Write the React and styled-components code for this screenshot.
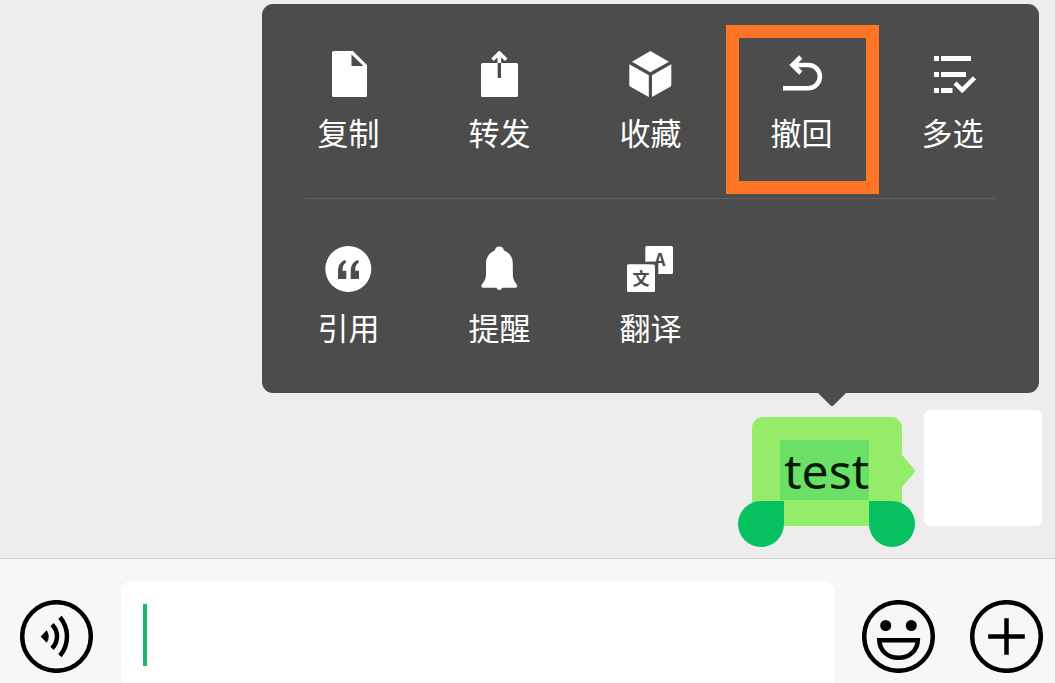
import React, { useState } from 'react'
import styled, { createGlobalStyle } from 'styled-components'


const CopyIcon = () => (
  <Glyph viewBox="0 0 47 46">
    <path fillRule="evenodd" d="M9 0H28L42 14V44.500Q42 46 40.500 46H9Q7 46 7 44.500V1.500Q7 0 9 0ZM26.500 3.500V15H38.500Z" />
  </Glyph>
)

const ForwardIcon = () => (
  <Glyph viewBox="0 0 47 46">
    <path d="M6.500 12H21.700V27H25V12H40.500Q42 12 42 13.500V44.500Q42 46 40.500 46H6.500Q5 46 5 44.500V13.500Q5 12 6.500 12Z" />
    <path d="M23.300 12V3M16.500 8.800L23.300 2L30.200 8.800" fill="none" stroke="#fff" strokeWidth="3.600" />
  </Glyph>
)

const FavoriteIcon = () => (
  <Glyph viewBox="0 0 47 46">
    <path d="M23.300 0L42 10.700L23.300 21.300L5 10.700Z" />
    <path d="M2.300 13.300L21.800 24.300V46L3.500 35.700Q2.300 35 2.300 33.700Z" />
    <path d="M44.300 13.300L25 24.300V46L43.200 35.700Q44.300 35 44.300 33.700Z" />
  </Glyph>
)

const RecallIcon = () => (
  <Glyph viewBox="0 0 47 46">
    <path d="M15 14H30.300A11.600 11.600 0 0 1 30.300 37.200H5M22.800 6L14.600 14L22.800 22" fill="none" stroke="#fff" strokeWidth="4.600" />
  </Glyph>
)

const SelectIcon = () => (
  <Glyph viewBox="0 0 47 46">
    <path d="M5 5H10V10H5ZM12 5H42V10H12ZM5 21H10V26H5ZM12 21H37V26H12ZM5 37H10V42H5ZM12 37H23.500V42H12Z" />
    <path d="M26 32L33.200 39L45.500 26.800" fill="none" stroke="#fff" strokeWidth="4.500" />
  </Glyph>
)

const QuoteIcon = () => (
  <Glyph viewBox="0 0 47 46">
    <circle cx="23.300" cy="23" r="23" />
    <path id="mark" d="M13 33V25.500C13 19.500 15.500 15.500 20.300 14L21.300 16.300C18.500 18 17.500 20.500 17.500 24.800H21.300V33Z" fill="#4c4c4c" />
    <use href="#mark" x="12.700" />
  </Glyph>
)

const RemindIcon = () => (
  <Glyph viewBox="0 0 47 46">
    <path d="M18.800 4.500A4.600 4.600 0 0 1 27.900 4.500C33.500 6.500 36.800 11.500 36.800 17.500V28C36.800 33 38.500 35.500 40.800 38.500C41.800 40 41 41.800 39.500 41.800H26.300A3 3 0 0 1 20.500 41.800H7.200C5.600 41.800 4.900 40 5.800 38.500C8.200 35.500 10 33 10 28V17.500C10 11.500 13.300 6.500 18.800 4.500Z" />
  </Glyph>
)

const TranslateIcon = () => (
  <Glyph viewBox="0 0 47 46">
    <path d="M20 0H44.500Q46 0 46 1.500V26.500Q46 28 44.500 28H31.300V17.500Q31.300 15.700 29.500 15.700H18.300V1.500Q18.300 0 20 0Z" />
    <rect y="18.300" width="28" height="27.700" rx="1.500" />
    <GlyphText x="33" y="20">A</GlyphText>
    <path d="M22 15.700H29.500Q31.300 15.700 31.300 17.500V18.300H22Z" fill="#4c4c4c" />
    <GlyphText x="14" y="39">文</GlyphText>
  </Glyph>
)

const VoiceIcon = () => (
  <RoundIcon viewBox="0 0 73 73">
    <circle cx="36.500" cy="36.500" r="34.300" />
    <path d="M20.700 36.500L26.700 30.300Q31 36.500 26.700 42.700Z" fill="#000" stroke="none" />
    <path d="M32 24.700A16.400 16.400 0 0 1 32 48.300M40 17.300A29.900 29.900 0 0 1 40 55.700" />
  </RoundIcon>
)

const SmileIcon = () => (
  <RoundIcon viewBox="0 0 73 73">
    <circle cx="36.500" cy="36.500" r="34.300" />
    <circle cx="23.700" cy="25.500" r="5.500" fill="#000" stroke="none" />
    <circle cx="49.300" cy="25.500" r="5.500" fill="#000" stroke="none" />
    <path d="M17.300 40.300H55.800C55.300 50.500 47.500 57.800 36.500 57.800S17.800 50.500 17.300 40.300Z" />
  </RoundIcon>
)

const PlusIcon = () => (
  <RoundIcon viewBox="0 0 73 73">
    <circle cx="36.500" cy="36.500" r="34.300" />
    <path d="M18.200 36.500H54.800M36.500 18.200V54.800" />
  </RoundIcon>
)

const topActions = [
  { label: '复制', icon: CopyIcon },
  { label: '转发', icon: ForwardIcon },
  { label: '收藏', icon: FavoriteIcon },
  { label: '撤回', icon: RecallIcon, marked: true },
  { label: '多选', icon: SelectIcon },
]

const bottomActions = [
  { label: '引用', icon: QuoteIcon },
  { label: '提醒', icon: RemindIcon },
  { label: '翻译', icon: TranslateIcon },
]

const ActionRow = ({ actions }) => (
  <Row>
    {actions.map(({ label, icon: Icon, marked }) => (
      <Action key={label} type="button" $marked={marked}>
        <Icon />
        {label}
      </Action>
    ))}
  </Row>
)

const App = () => {

  const [message, setMessage] = useState("") // 输入内容

  return (
    <Page>
      <GlobalStyle />
      <Chat>
        <Menu>
          <ActionRow actions={topActions} />
          <Divider />
          <ActionRow actions={bottomActions} />
          <MenuArrow viewBox="0 0 28 13">
            <path d="M0 0H28L16 12Q14 14 12 12Z" />
          </MenuArrow>
        </Menu>
        <Message>
          <Bubble>
            <Selected>test</Selected>
            <Tail viewBox="0 0 13 32">
              <path d="M0 0L12 14Q14 16 12 18L0 32Z" />
            </Tail>
            <Handle $side="left" />
            <Handle $side="right" />
          </Bubble>
          <Avatar />
        </Message>
      </Chat>
      <Composer>
        <IconButton type="button" aria-label="语音"><VoiceIcon /></IconButton>
        <Field>
          <Input
            aria-label="消息"
            type="text"
            value={message}
            onChange={(e) => setMessage(e.target.value)}
          />
          {message === "" && <Caret />}
        </Field>
        <Tools>
          <IconButton type="button" aria-label="表情"><SmileIcon /></IconButton>
          <IconButton type="button" aria-label="更多"><PlusIcon /></IconButton>
        </Tools>
      </Composer>
    </Page>
  )
}

export default App

const GlobalStyle = createGlobalStyle`
  * {
    box-sizing: border-box;
  }

  body {
    margin: 0;
    font-family: "Noto Sans CJK SC", sans-serif;
  }

  button {
    padding: 0;
    border: none;
    background: none;
    font: inherit;
    cursor: pointer;
  }
`

const Page = styled.div`
  display: flex;
  flex-direction: column;
  min-height: 100vh;
  background-color: #ededed;
`

const Chat = styled.main`
  display: flex;
  flex: 1;
  flex-direction: column;
  align-items: flex-end;
  gap: 17px;
  padding: 4px 13px 32px;
`

const Menu = styled.div`
  position: relative;
  width: 100%;
  max-width: 777px;
  margin-right: 3px;
  border-radius: 11px;
  background-color: #4c4c4c;
`

const Row = styled.div`
  display: grid;
  grid-template-columns: repeat(5, 1fr);
  padding: 0 11px;
`

const Action = styled.button`
  position: relative;
  display: flex;
  flex-direction: column;
  align-items: center;
  gap: 15px;
  height: 194px;
  padding-top: 47px;
  color: #fff;
  font-size: 31px;
  line-height: 40px;

  &::after {
    content: "";
    display: ${props => props.$marked ? "block" : "none"};
    position: absolute;
    top: 21px;
    right: -2px;
    bottom: 4px;
    left: 0;
    border: 13px solid #ff7526;
  }
`

const Divider = styled.hr`
  height: 1px;
  margin: 0 43px;
  border: none;
  background-color: #5e5e5e;
`

const Glyph = styled.svg`
  flex: none;
  width: 47px;
  height: 46px;
  fill: #fff;
`

const GlyphText = styled.text`
  fill: #4c4c4c;
  font-size: 17px;
  font-weight: 700;
  text-anchor: middle;
`

const MenuArrow = styled.svg`
  position: absolute;
  top: 100%;
  right: 193px;
  width: 28px;
  height: 13px;
  fill: #4c4c4c;
`

const Message = styled.div`
  display: flex;
  align-items: flex-end;
  gap: 22px;
`

const Bubble = styled.div`
  position: relative;
  padding: 23px 33px 26px 28px;
  border-radius: 11px;
  background-color: #95ec69;
`

const Selected = styled.span`
  display: block;
  padding: 2px 0 0 4px;
  background-color: #6be067;
  color: #061a00;
  font-family: "Noto Sans", sans-serif;
  font-size: 48px;
  line-height: 58px;
`

const Tail = styled.svg`
  position: absolute;
  top: 38px;
  left: 100%;
  width: 13px;
  height: 32px;
  fill: #95ec69;
`

const Handle = styled.span`
  position: absolute;
  top: 84px;
  ${props => props.$side}: ${props => props.$side === "left" ? "-14px" : "-13px"};
  width: 46px;
  height: 46px;
  border-radius: ${props => props.$side === "left" ? "50% 0 50% 50%" : "0 50% 50% 50%"};
  background-color: #07c160;
`

const Avatar = styled.div`
  width: 118px;
  height: 116px;
  border-radius: 6px;
  background-color: #fff;
`

const Composer = styled.footer`
  display: flex;
  align-items: flex-start;
  gap: 28px;
  padding: 22px 12px 0 20px;
  border-top: 1px solid #d0d0d0;
  background-color: #f7f7f7;
`

const Field = styled.div`
  position: relative;
  flex: 1;
`

const Input = styled.input`
  display: block;
  width: 100%;
  height: 102px;
  padding: 0 22px;
  border: none;
  border-radius: 11px 11px 0 0;
  outline: none;
  background-color: #fff;
  font: inherit;
  font-size: 48px;
`

const Caret = styled.span`
  position: absolute;
  top: 23px;
  left: 22px;
  width: 4px;
  height: 62px;
  background-color: #1bb868;
  pointer-events: none;
`

const Tools = styled.div`
  display: flex;
  gap: 35px;
`

const IconButton = styled.button`
  flex: none;
  margin-top: 19px;
`

const RoundIcon = styled.svg`
  display: block;
  width: 73px;
  height: 73px;
  fill: none;
  stroke: #000;
  stroke-width: 4.5px;
`
